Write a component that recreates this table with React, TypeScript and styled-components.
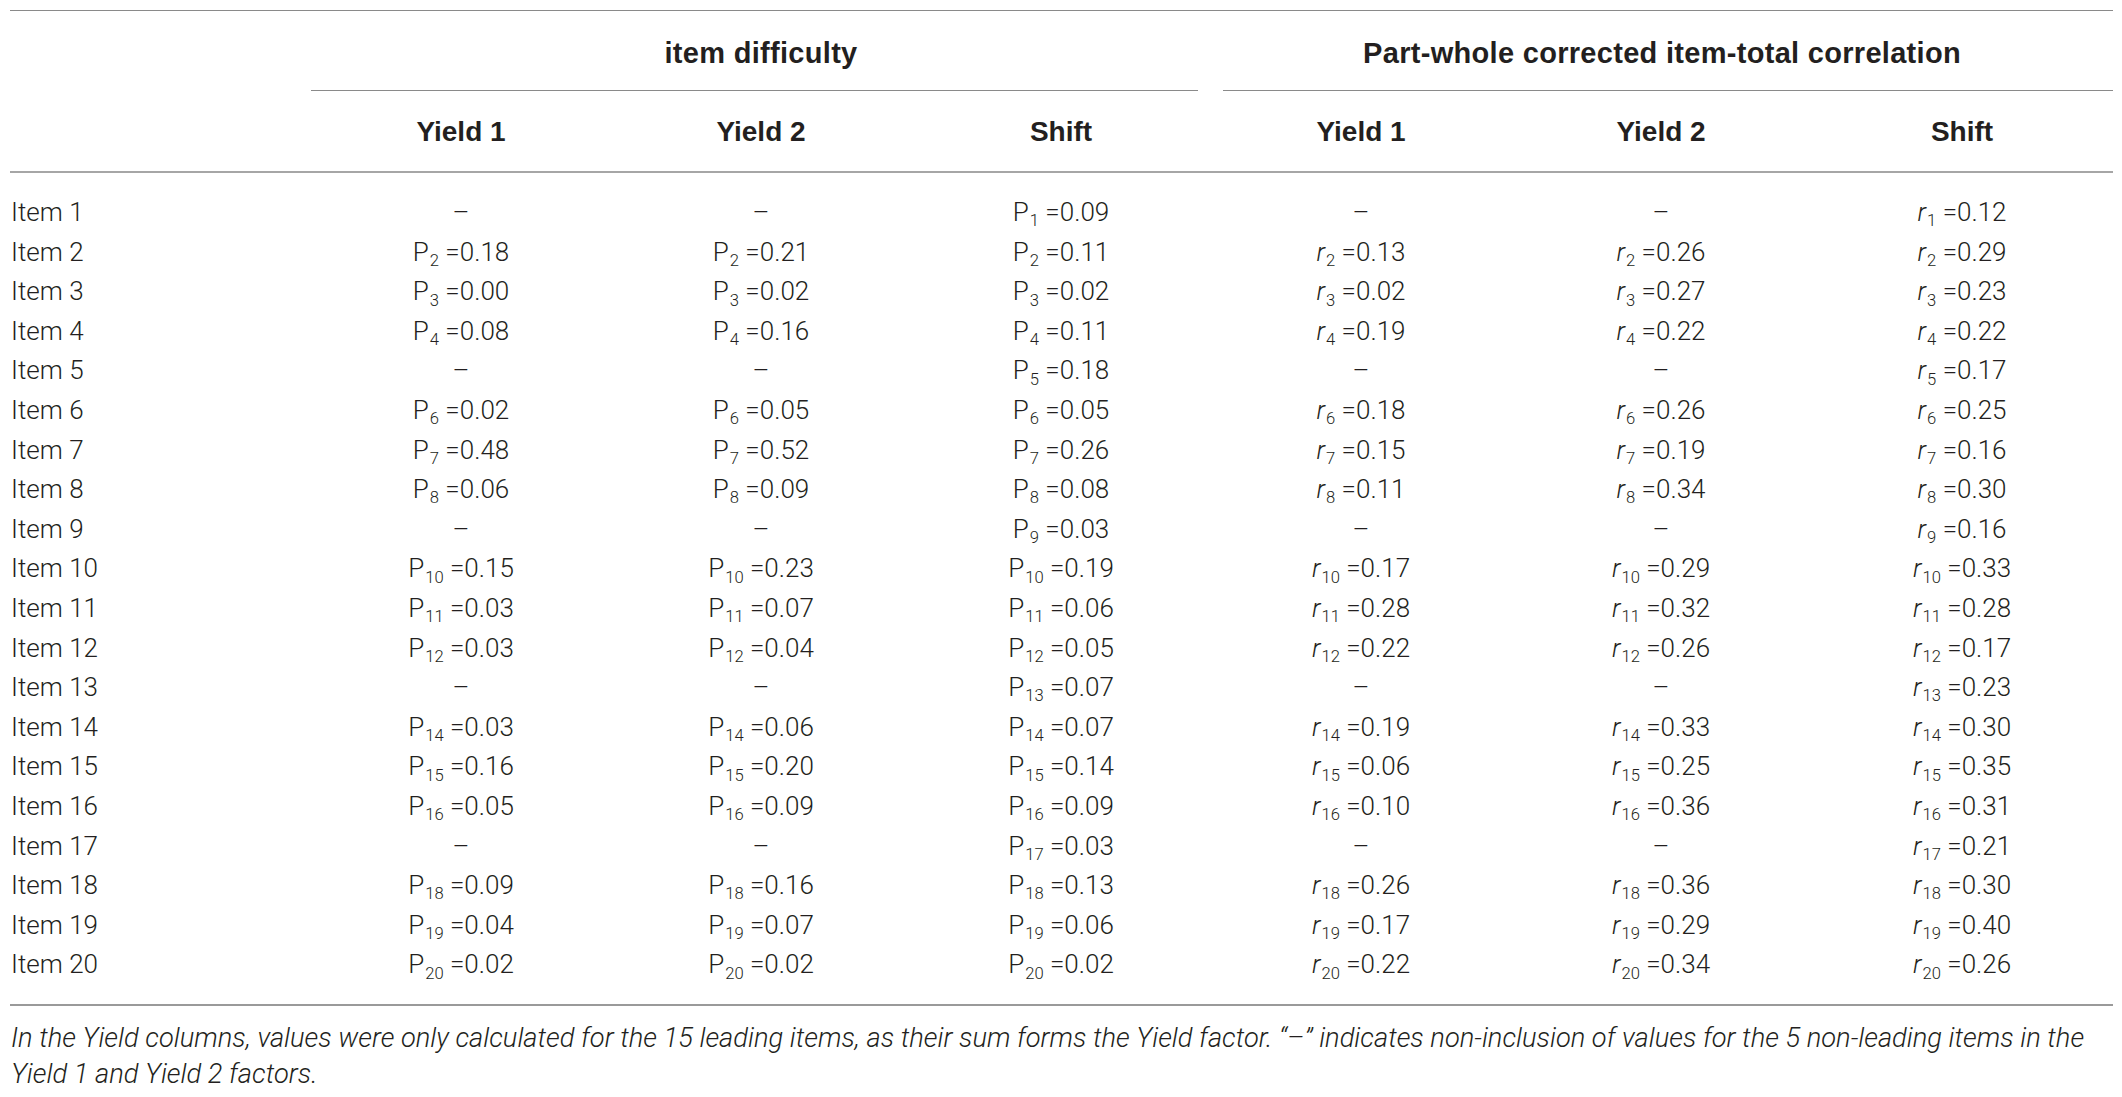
import React from 'react';
import styled, { createGlobalStyle } from 'styled-components';

const GlobalStyle = createGlobalStyle`
  html, body {
    margin: 0;
    padding: 0;
    background: #ffffff;
  }
  body {
    font-family: Roboto, "Liberation Sans", Arial, sans-serif;
    color: #231f20;
  }
`;

const Page = styled.div`
  padding: 10px 9px 0 10px;
  width: 2103px;
`;

const Table = styled.table`
  width: 2103px;
  table-layout: fixed;
  border-collapse: separate;
  border-spacing: 0;
  border-top: 1.5px solid #8a8a8a;
  border-bottom: 2px solid #9a9a9a;
`;

const GroupCell = styled.th`
  font-family: "Liberation Sans", Arial, sans-serif;
  font-weight: 700;
  font-size: 29px;
  letter-spacing: 0.3px;
  line-height: 30px;
  color: #231f20;
  text-align: center;
  padding: 27px 0 0;
`;

const GroupTitle = styled.div`
  padding-bottom: 22px;
`;

const GroupRule = styled.div<{ $side: 'left' | 'right' }>`
  height: 0;
  border-bottom: 1.5px solid #8a8a8a;
  margin-left: ${(p) => (p.$side === 'right' ? '12px' : '0')};
  margin-right: ${(p) => (p.$side === 'left' ? '13px' : '0')};
`;

const SubHead = styled.th`
  font-family: "Liberation Sans", Arial, sans-serif;
  font-weight: 700;
  font-size: 28px;
  line-height: 30px;
  color: #231f20;
  text-align: center;
  padding: 25.5px 0 24px;
  border-bottom: 2px solid #a6a6a6;
`;

const CornerCell = styled.th`
  border-bottom: 2px solid #a6a6a6;
`;

const Body = styled.tbody`
  tr:first-child td {
    padding-top: 20.5px;
  }
  tr:last-child td {
    padding-bottom: 19px;
  }
`;

const LabelCell = styled.td`
  font-weight: 300;
  font-size: 26px;
  line-height: 39.6px;
  text-align: left;
  padding: 0 0 0 1px;
  white-space: nowrap;
`;

const ValueCell = styled.td`
  font-weight: 300;
  font-size: 26px;
  line-height: 39.6px;
  text-align: center;
  padding: 0;
  white-space: nowrap;
`;

const Sym = styled.span<{ $italic?: boolean }>`
  font-style: ${(p) => (p.$italic ? 'italic' : 'normal')};
`;

const Sub = styled.span`
  font-size: 0.64em;
  line-height: 0;
  position: relative;
  top: 0.32em;
  margin-left: 1px;
`;

const Note = styled.p`
  margin: 14px 0 0 1px;
  font-style: italic;
  font-weight: 300;
  font-size: 27.3px;
  line-height: 36px;
  white-space: nowrap;
`;

type Row = [string, string, string, string, string, string];

const rows: Row[] = [
  ['', '', '0.09', '', '', '0.12'],
  ['0.18', '0.21', '0.11', '0.13', '0.26', '0.29'],
  ['0.00', '0.02', '0.02', '0.02', '0.27', '0.23'],
  ['0.08', '0.16', '0.11', '0.19', '0.22', '0.22'],
  ['', '', '0.18', '', '', '0.17'],
  ['0.02', '0.05', '0.05', '0.18', '0.26', '0.25'],
  ['0.48', '0.52', '0.26', '0.15', '0.19', '0.16'],
  ['0.06', '0.09', '0.08', '0.11', '0.34', '0.30'],
  ['', '', '0.03', '', '', '0.16'],
  ['0.15', '0.23', '0.19', '0.17', '0.29', '0.33'],
  ['0.03', '0.07', '0.06', '0.28', '0.32', '0.28'],
  ['0.03', '0.04', '0.05', '0.22', '0.26', '0.17'],
  ['', '', '0.07', '', '', '0.23'],
  ['0.03', '0.06', '0.07', '0.19', '0.33', '0.30'],
  ['0.16', '0.20', '0.14', '0.06', '0.25', '0.35'],
  ['0.05', '0.09', '0.09', '0.10', '0.36', '0.31'],
  ['', '', '0.03', '', '', '0.21'],
  ['0.09', '0.16', '0.13', '0.26', '0.36', '0.30'],
  ['0.04', '0.07', '0.06', '0.17', '0.29', '0.40'],
  ['0.02', '0.02', '0.02', '0.22', '0.34', '0.26'],
];

const Value: React.FC<{ v: string; n: number; corr: boolean }> = ({ v, n, corr }) => {
  if (!v) return <>–</>;
  return (
    <>
      <Sym $italic={corr}>{corr ? 'r' : 'P'}</Sym>
      <Sub>{n}</Sub> ={v}
    </>
  );
};

const subHeads = ['Yield 1', 'Yield 2', 'Shift', 'Yield 1', 'Yield 2', 'Shift'];

export default function App() {
  return (
    <>
      <GlobalStyle />
      <Page>
        <Table>
          <colgroup>
            <col style={{ width: 301 }} />
            <col style={{ width: 300 }} />
            <col style={{ width: 300 }} />
            <col style={{ width: 300 }} />
            <col style={{ width: 300 }} />
            <col style={{ width: 300 }} />
            <col style={{ width: 302 }} />
          </colgroup>
          <thead>
            <tr>
              <CornerCell rowSpan={2} />
              <GroupCell colSpan={3}>
                <GroupTitle>item difficulty</GroupTitle>
                <GroupRule $side="left" />
              </GroupCell>
              <GroupCell colSpan={3}>
                <GroupTitle>Part-whole corrected item-total correlation</GroupTitle>
                <GroupRule $side="right" />
              </GroupCell>
            </tr>
            <tr>
              {subHeads.map((h, i) => (
                <SubHead key={i}>{h}</SubHead>
              ))}
            </tr>
          </thead>
          <Body>
            {rows.map((r, i) => (
              <tr key={i}>
                <LabelCell>Item {i + 1}</LabelCell>
                {r.map((v, j) => (
                  <ValueCell key={j}>
                    <Value v={v} n={i + 1} corr={j >= 3} />
                  </ValueCell>
                ))}
              </tr>
            ))}
          </Body>
        </Table>
        <Note>
          In the Yield columns, values were only calculated for the 15 leading items, as their sum forms the Yield
          factor. “–” indicates non-inclusion of values for the 5 non-leading items in the
          <br />
          Yield 1 and Yield 2 factors.
        </Note>
      </Page>
    </>
  );
}
